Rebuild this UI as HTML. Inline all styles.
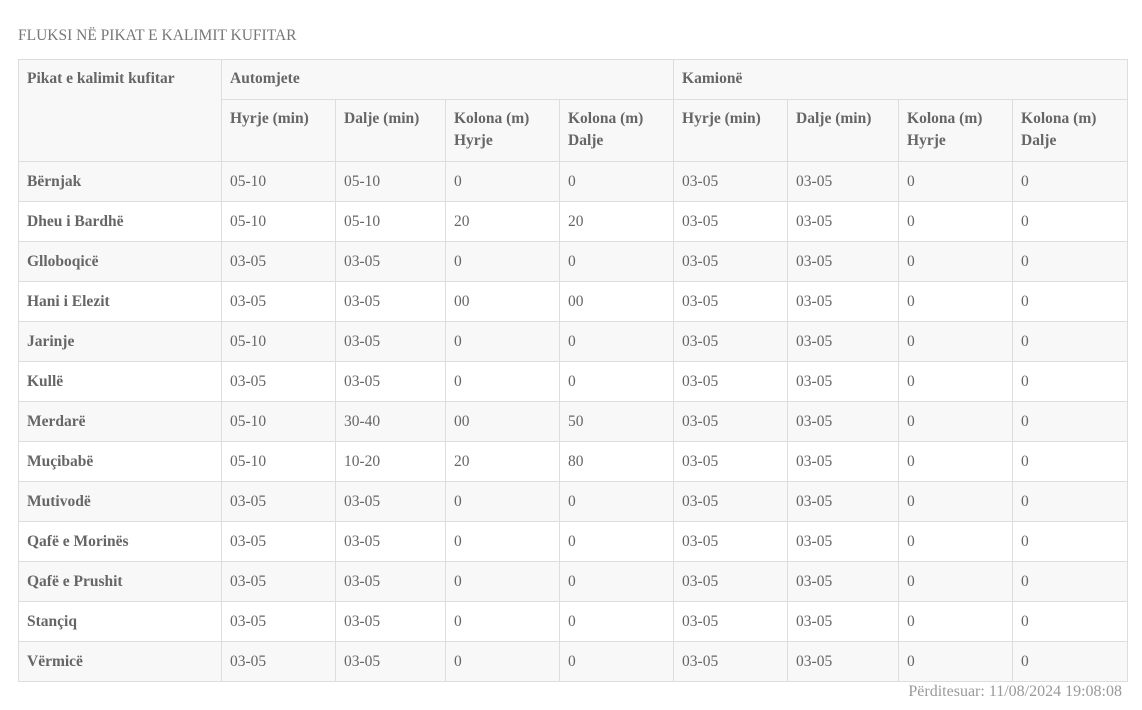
<!DOCTYPE html>
<html><head><meta charset="utf-8"><style>
body{margin:0;background:#fff;font-family:"Liberation Serif",serif;color:#666;}
.t{position:absolute;left:18px;top:27px;font-size:15.5px;color:#777;}
table{position:absolute;left:18px;top:59px;border-collapse:collapse;table-layout:fixed;width:1109px;font-size:15.5px;}
td,th{border:1px solid #ddd;padding:0 8px;text-align:left;vertical-align:top;line-height:22px;}
th{font-weight:bold;color:#666;background:#f8f8f8;padding-top:8px;}
tr.h1 th{height:31px}
tr.h2 th{height:53px}
td{height:39px;vertical-align:middle;}
td:first-child{font-weight:bold}
tbody tr:nth-child(odd) td{background:#f8f8f8}
.f{position:absolute;right:20px;top:683px;font-size:16px;color:#999;}
</style></head><body>
<div class="t">FLUKSI NË PIKAT E KALIMIT KUFITAR</div>
<table>
<colgroup><col style="width:203px"><col style="width:114px"><col style="width:110px"><col style="width:114px"><col style="width:114px"><col style="width:114px"><col style="width:111px"><col style="width:114px"><col style="width:115px"></colgroup>
<thead>
<tr class="h1"><th rowspan="2">Pikat e kalimit kufitar</th><th colspan="4">Automjete</th><th colspan="4">Kamionë</th></tr>
<tr class="h2"><th>Hyrje (min)</th><th>Dalje (min)</th><th>Kolona (m) Hyrje</th><th>Kolona (m) Dalje</th><th>Hyrje (min)</th><th>Dalje (min)</th><th>Kolona (m) Hyrje</th><th>Kolona (m) Dalje</th></tr>
</thead>
<tbody>
<tr><td>Bërnjak</td><td>05-10</td><td>05-10</td><td>0</td><td>0</td><td>03-05</td><td>03-05</td><td>0</td><td>0</td></tr>
<tr><td>Dheu i Bardhë</td><td>05-10</td><td>05-10</td><td>20</td><td>20</td><td>03-05</td><td>03-05</td><td>0</td><td>0</td></tr>
<tr><td>Glloboqicë</td><td>03-05</td><td>03-05</td><td>0</td><td>0</td><td>03-05</td><td>03-05</td><td>0</td><td>0</td></tr>
<tr><td>Hani i Elezit</td><td>03-05</td><td>03-05</td><td>00</td><td>00</td><td>03-05</td><td>03-05</td><td>0</td><td>0</td></tr>
<tr><td>Jarinje</td><td>05-10</td><td>03-05</td><td>0</td><td>0</td><td>03-05</td><td>03-05</td><td>0</td><td>0</td></tr>
<tr><td>Kullë</td><td>03-05</td><td>03-05</td><td>0</td><td>0</td><td>03-05</td><td>03-05</td><td>0</td><td>0</td></tr>
<tr><td>Merdarë</td><td>05-10</td><td>30-40</td><td>00</td><td>50</td><td>03-05</td><td>03-05</td><td>0</td><td>0</td></tr>
<tr><td>Muçibabë</td><td>05-10</td><td>10-20</td><td>20</td><td>80</td><td>03-05</td><td>03-05</td><td>0</td><td>0</td></tr>
<tr><td>Mutivodë</td><td>03-05</td><td>03-05</td><td>0</td><td>0</td><td>03-05</td><td>03-05</td><td>0</td><td>0</td></tr>
<tr><td>Qafë e Morinës</td><td>03-05</td><td>03-05</td><td>0</td><td>0</td><td>03-05</td><td>03-05</td><td>0</td><td>0</td></tr>
<tr><td>Qafë e Prushit</td><td>03-05</td><td>03-05</td><td>0</td><td>0</td><td>03-05</td><td>03-05</td><td>0</td><td>0</td></tr>
<tr><td>Stançiq</td><td>03-05</td><td>03-05</td><td>0</td><td>0</td><td>03-05</td><td>03-05</td><td>0</td><td>0</td></tr>
<tr><td>Vërmicë</td><td>03-05</td><td>03-05</td><td>0</td><td>0</td><td>03-05</td><td>03-05</td><td>0</td><td>0</td></tr>
</tbody>
</table>
<div class="f">Përditesuar: 11/08/2024 19:08:08</div>
</body></html>
